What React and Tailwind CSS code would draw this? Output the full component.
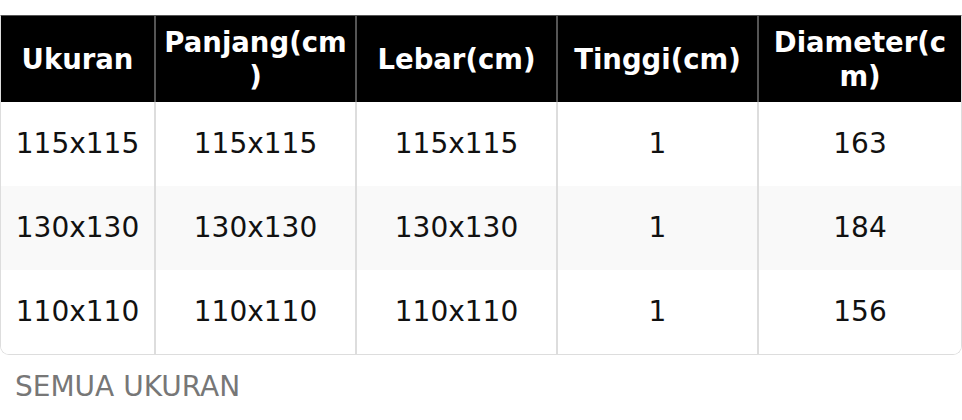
import React from "react";

const headers = ["Ukuran", "Panjang(cm)", "Lebar(cm)", "Tinggi(cm)", "Diameter(cm)"];
const rows = [
  ["115x115", "115x115", "115x115", "1", "163"],
  ["130x130", "130x130", "130x130", "1", "184"],
  ["110x110", "110x110", "110x110", "1", "156"],
];

export default function App() {
  return (
    <div className="w-[962px] h-[420px] bg-white pt-[15px] font-['DejaVu_Sans',sans-serif]">
      <div className="w-[962px] border border-[#dddddd] border-t-[#555555] rounded-b-[9px] overflow-hidden">
        <div className="grid grid-cols-[153px_201px_201px_201px_204px] bg-black">
          {headers.map((h, i) => (
            <div
              key={h}
              className={
                "flex items-center justify-center text-center py-[9px] px-[6px] text-[27.5px] leading-[34px] font-bold text-white [overflow-wrap:anywhere] " +
                (i > 0 ? "border-l-2 border-[#555555]" : "")
              }
            >
              <span className="min-w-0 max-w-full">{h}</span>
            </div>
          ))}
        </div>
        {rows.map((r, ri) => (
          <div
            key={ri}
            className={
              "grid grid-cols-[153px_201px_201px_201px_204px] " +
              (ri === 1 ? "bg-[#f9f9f9]" : "bg-white")
            }
          >
            {r.map((c, ci) => (
              <div
                key={ci}
                className={
                  "flex items-center justify-center text-center py-[25px] text-[28px] leading-[34px] text-[#111111] " +
                  (ci > 0 ? "border-l-2 border-[#dddddd]" : "")
                }
              >
                {c}
              </div>
            ))}
          </div>
        ))}
      </div>
      <div className="mt-[15px] pl-[15px] text-[28px] leading-[34px] text-[#777777]">SEMUA UKURAN</div>
    </div>
  );
}
